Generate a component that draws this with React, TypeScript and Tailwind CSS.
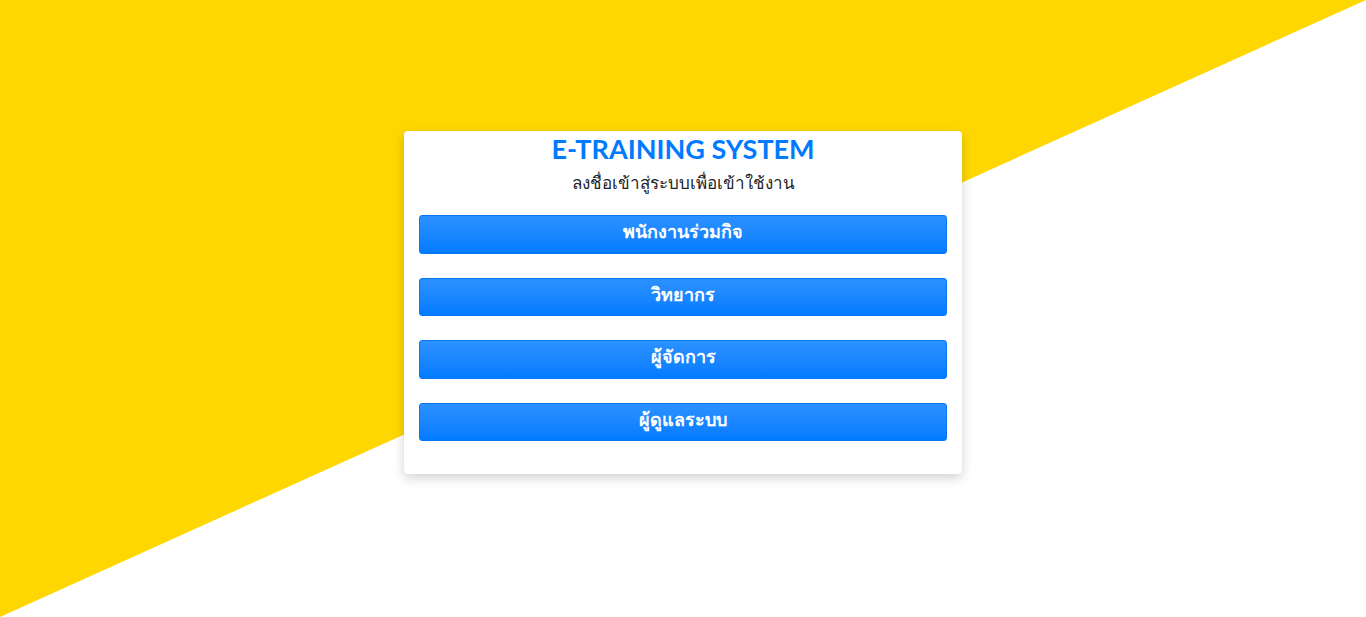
const roles = ['พนักงานร่วมกิจ', 'วิทยากร', 'ผู้จัดการ', 'ผู้ดูแลระบบ'];

const RoleButton = ({ label }: { label: string }) => (
  <button
    type="button"
    className="h-[38.5px] w-full rounded-[3px] border border-[#0a76f2] bg-gradient-to-b from-[#2b91ff] to-[#007bff] pb-[6px] text-[18px] font-bold leading-[28px] text-white"
  >
    {label}
  </button>
);

const App = () => {
  return (
    <div
      className="relative min-h-[617px] w-full overflow-hidden bg-white"
      style={{ fontFamily: '"Lato", "Noto Sans", sans-serif' }}
    >
      <div className="absolute inset-0 bg-[#ffd700] [clip-path:polygon(0_0,100%_0,0_100%)]" />
      <main className="relative flex justify-center pt-[131px]">
        <div className="w-[558px] rounded-[4px] bg-white px-[15px] pb-[33px] shadow-[0_4px_12px_rgba(0,0,0,0.18)]">
          <h1 className="mt-[2px] h-[34px] text-center text-[27px] font-bold leading-[32px] text-[#007bff]">
            E-TRAINING SYSTEM
          </h1>
          <p className="mt-[2px] h-[28px] text-center text-[17px] leading-[28px] text-[#212529]">
            ลงชื่อเข้าสู่ระบบเพื่อเข้าใช้งาน
          </p>
          <div className="mt-[18px] flex flex-col gap-[24px]">
            {roles.map((r) => (
              <RoleButton key={r} label={r} />
            ))}
          </div>
        </div>
      </main>
    </div>
  );
};

export default App;
